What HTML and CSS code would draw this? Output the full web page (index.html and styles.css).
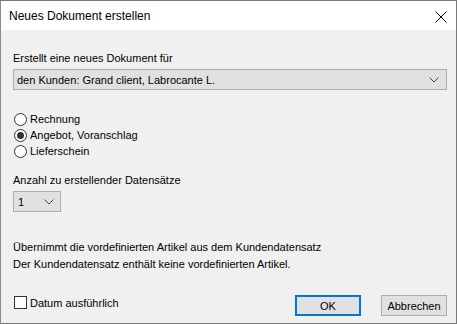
FILE: index.html
```html
<!DOCTYPE html>
<html lang="de">
<head>
    <meta charset="UTF-8">
    <meta name="viewport" content="width=device-width, initial-scale=1.0">
    <title>Neues Dokument erstellen</title>
    <link rel="stylesheet" href="styles.css">
</head>
<body>
    <div class="dialog">
        <div class="titlebar">
            <span class="title">Neues Dokument erstellen</span>
            <span class="close">
                <svg width="12" height="12" viewBox="0 0 12 12">
                    <path d="M0.5 0.5 L11.5 11.5 M11.5 0.5 L0.5 11.5" stroke="#000" stroke-width="1" fill="none"/>
                </svg>
            </span>
        </div>

        <div class="content">
            <div class="label first">Erstellt eine neues Dokument für</div>
            <div class="combo wide">
                <span>den Kunden: Grand client, Labrocante L.</span>
                <svg class="chevron" width="10" height="6" viewBox="0 0 10 6">
                    <path d="M0.5 0.5 L5 5 L9.5 0.5" stroke="#444" stroke-width="1" fill="none"/>
                </svg>
            </div>

            <div class="radios">
                <label class="radio"><span class="circle"></span>Rechnung</label>
                <label class="radio"><span class="circle checked"></span>Angebot, Voranschlag</label>
                <label class="radio"><span class="circle"></span>Lieferschein</label>
            </div>

            <div class="label">Anzahl zu erstellender Datensätze</div>
            <div class="combo small">
                <span>1</span>
                <svg class="chevron" width="10" height="6" viewBox="0 0 10 6">
                    <path d="M0.5 0.5 L5 5 L9.5 0.5" stroke="#444" stroke-width="1" fill="none"/>
                </svg>
            </div>

            <div class="info">
                <p>Übernimmt die vordefinierten Artikel aus dem Kundendatensatz</p>
                <p>Der Kundendatensatz enthält keine vordefinierten Artikel.</p>
            </div>

            <div class="footer">
                <label class="check"><span class="box"></span>Datum ausführlich</label>
                <div class="buttons">
                    <button class="btn default">OK</button>
                    <button class="btn">Abbrechen</button>
                </div>
            </div>
        </div>
    </div>
</body>
</html>
```

FILE: styles.css
```css
body {
    margin: 0;
    background-color: #6b6b6b;
    font-family: "Liberation Sans", Arial, sans-serif;
    font-size: 12px;
    color: #000;
}

.dialog {
    width: 455px;
    height: 322px;
    background-color: #f0f0f0;
    border: 1px solid #7a7a7a;
    border-left-color: #8c8c8c;
    display: flex;
    flex-direction: column;
}

.titlebar {
    height: 29px;
    background-color: #fff;
    display: flex;
    align-items: center;
    justify-content: space-between;
    padding: 0 8px 0 8px;
}

.title {
    font-size: 12px;
}

.close {
    display: flex;
    margin-right: 1px;
    margin-top: 2px;
}

.content {
    padding: 0 9px 0 12px;
    display: flex;
    flex-direction: column;
    flex: 1;
}

.label {
    font-size: 11px;
    line-height: 15px;
    margin-top: 14px;
}

.label.first {
    margin-top: 21px;
}

.combo {
    margin-top: 3px;
    height: 19px;
    border: 1px solid #adadad;
    background-color: #e1e1e1;
    display: flex;
    align-items: center;
    justify-content: space-between;
    padding: 0 7px 0 3px;
    font-size: 11px;
}

.combo.small {
    width: 36px;
    padding-left: 4px;
    padding-right: 6px;
}

.radios {
    margin-top: 21px;
    display: flex;
    flex-direction: column;
}

.radio {
    display: flex;
    align-items: center;
    height: 16px;
    font-size: 11px;
}

.circle {
    width: 11px;
    height: 11px;
    border: 1px solid #333;
    border-radius: 50%;
    background-color: #fff;
    margin: 0 3px 0 1px;
    display: flex;
    align-items: center;
    justify-content: center;
}

.circle.checked::after {
    content: "";
    width: 7px;
    height: 7px;
    border-radius: 50%;
    background-color: #333;
}

.info {
    margin-top: 27px;
    font-size: 11px;
    line-height: 17px;
}

.info p {
    margin: 0;
}

.footer {
    margin-top: 22px;
    display: flex;
    align-items: center;
    justify-content: space-between;
}

.check {
    display: flex;
    align-items: center;
    font-size: 11px;
    margin-top: -6px;
}

.box {
    width: 11px;
    height: 11px;
    border: 1px solid #333;
    background-color: #fff;
    margin: 0 3px 0 1px;
}

.buttons {
    display: flex;
    gap: 20px;
}

.btn {
    font-family: "Liberation Sans", Arial, sans-serif;
    font-size: 11px;
    height: 21px;
    width: 66px;
    background-color: #e1e1e1;
    border: 1px solid #adadad;
    padding: 0;
    color: #000;
}

.btn.default {
    border: 2px solid #0078d7;
}
```
